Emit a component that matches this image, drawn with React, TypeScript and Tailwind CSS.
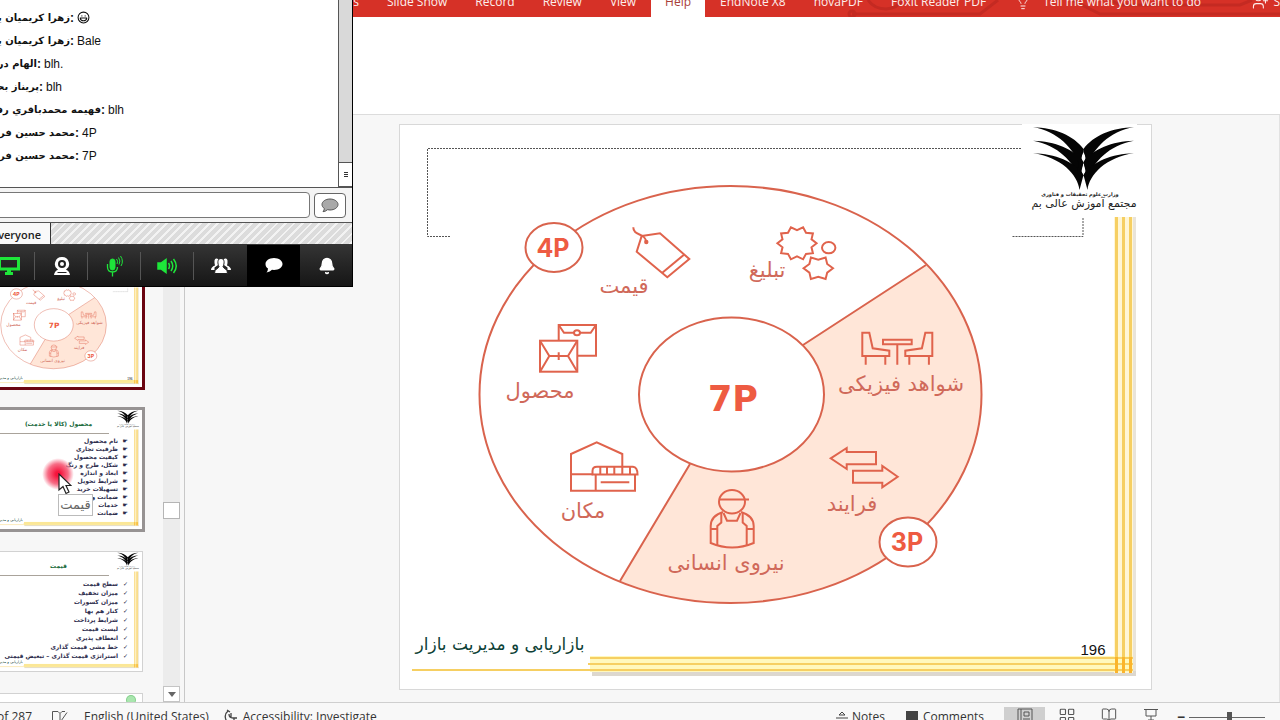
import type { ReactNode } from "react";
import { Bell, BookOpen, Laugh, LayoutGrid, Lightbulb, UserPlus } from "lucide-react";

type Message = {
  id: number;
  name: string;
  // visible width of the sender column
  width: number;
  text: ReactNode;
};

const messages: Message[] = [
  { id: 1, name: "زهرا کریمیان ینگجه", width: 70, text: <Laugh size={13} strokeWidth={2} /> },
  { id: 2, name: "زهرا کریمیان ینگجه", width: 70, text: "Bale" },
  { id: 3, name: "الهام دریایی", width: 37, text: "blh." },
  { id: 4, name: "پریناز بحرینی", width: 39, text: "blh" },
  { id: 5, name: "فهیمه محمدباقري رفسنجانی", width: 101, text: "blh" },
  { id: 6, name: "محمد حسین فروزانفر", width: 75, text: "4P" },
  { id: 7, name: "محمد حسین فروزانفر", width: 75, text: "7P" },
];

const productItems = [
  "نام محصول",
  "ظرفیت تجاری",
  "کیفیت محصول",
  "شکل، طرح و رنگ",
  "ابعاد و اندازه",
  "شرایط تحویل",
  "تسهیلات خرید",
  "ضمانت و",
  "خدمات",
  "ضمانت",
];

const priceItems = [
  "سطح قیمت",
  "میزان تخفیف",
  "میزان کسورات",
  "کنار هم بها",
  "شرایط پرداخت",
  "لیست قیمت",
  "انعطاف پذیری",
  "خط مشی قیمت گذاری",
  "استراتژی قیمت گذاری – تبعیض قیمتی",
];

const starPoints = (cx: number, cy: number, rx: number, ry: number, count: number, inner: number) =>
  Array.from({ length: count * 2 }, (_, i) => {
    const angle = (Math.PI * i) / count;
    const r = i % 2 ? inner : 1;
    return `${(cx + rx * r * Math.cos(angle)).toFixed(1)},${(cy + ry * r * Math.sin(angle)).toFixed(1)}`;
  }).join(" ");

const Wing = () => (
  <>
    <path d="M1134 127.300C1112 127.500 1093 136 1083.500 149L1085.500 158L1088.500 163C1093 150 1109 131 1134 127.300Z" />
    <path d="M1134 140.800C1112 141 1093 149.500 1083.500 162L1085.500 171L1088.500 177C1093 163 1109 145 1134 140.800Z" />
    <path d="M1134 153.300C1112 153.500 1092 162 1083.500 175L1087.500 190C1089 175 1106 157 1134 153.300Z" />
    <path d="M1083.500 149L1090 147V160L1088 163L1090 172L1087 177L1083.500 176L1086 170L1083.500 163L1086 157L1083.500 152Z" />
  </>
);

// Background shared by every slide: logo and golden frame
const SlideFrame = () => (
  <g>
    <rect x="1022" y="124" width="115" height="93" fill="#fff" />
    <g fill="#050505">
      <Wing />
      <g transform="translate(2167 0) scale(-1 1)">
        <Wing />
      </g>
    </g>
    <g fontFamily="'DejaVu Sans', sans-serif" textAnchor="middle" fill="#222">
      <text x="1080" y="196" fontSize="5" fontWeight="700">
        وزارت علوم تحقیقات و فناوری
      </text>
      <text x="1084" y="207" fontSize="11">
        مجتمع آموزش عالی بم
      </text>
    </g>
    <rect x="1132" y="217" width="4" height="459" fill="#e9e4da" />
    <rect x="592" y="671" width="544" height="5" fill="#ddd8cf" />
    <rect x="1114" y="217" width="19" height="456" fill="#fff6d6" />
    <rect x="590" y="656" width="543" height="16" fill="#fff8bd" />
    <g fill="#f6cf62">
      <rect x="1115" y="217" width="3" height="456" />
      <rect x="1122" y="217" width="3" height="456" />
      <rect x="1129" y="217" width="3" height="456" />
      <rect x="590" y="657" width="543" height="2" />
      <rect x="588" y="663" width="545" height="2" />
      <rect x="412" y="669" width="721" height="2" />
    </g>
    <g fill="#fbb42c">
      <rect x="1115" y="657" width="3" height="16" />
      <rect x="1122" y="657" width="3" height="16" />
      <rect x="1129" y="657" width="3" height="16" />
    </g>
    <text
      x="500"
      y="650"
      fontFamily="'DejaVu Sans', sans-serif"
      fontSize="17"
      textAnchor="middle"
      fill="#0d3f36"
    >
      بازاریابی و مدیریت بازار
    </text>
  </g>
);

const PriceTagIcon = () => (
  <g>
    <path d="M633.300 227.300C633 236 646 233 646 242" />
    <circle cx="646.300" cy="242" r="1.200" fill="#e0634c" />
    <path d="M641.700 236L660 233.300L689.300 259L667.300 277.300L636.700 251.700Z" />
    <path d="M684 254.700L662 273" />
  </g>
);

const PackageIcon = () => (
  <g>
    <path d="M558.700 340.700V325H596V355.700H577.300" />
    <path d="M558.700 325L564 332.700H574M580 332.700H590.700L596 325" />
    <ellipse cx="577" cy="332.700" rx="3" ry="2.500" />
    <rect x="540" y="340.700" width="37.300" height="31" />
    <path d="M540 340.700L549.300 356L540 371.700M577.300 340.700L568 356L577.300 371.700M549.300 356H568M558.700 352.300V360" />
  </g>
);

const GearsIcon = () => (
  <g>
    <polygon points={starPoints(797, 243.3, 19.6, 16.8, 10, 0.78)} />
    <polygon points={starPoints(818.3, 268.3, 14.7, 12.3, 6, 0.7)} />
    <ellipse cx="828.700" cy="247.700" rx="6.700" ry="5.600" />
  </g>
);

const Chair = () => (
  <path d="M862.300 332.700H869.300L872.700 348.300L889.300 350.700V356H862.300ZM865.700 356V364.700M885.300 356V364.700" />
);

const TableIcon = () => (
  <g>
    <Chair />
    <g transform="translate(1794.600 0) scale(-1 1)">
      <Chair />
    </g>
    <path d="M883 339.700H911.700V344.300H883ZM897.300 344.300V364.700" />
  </g>
);

const StoreIcon = () => (
  <g>
    <path d="M622.300 466.700V454L596.700 442.300L571 454V490.700H635V474.500M571 474.300H593M595.700 474.500V490.700" />
    <path d="M592.500 474.500V471Q592.500 466.700 597 466.700H633Q637.500 467 637.500 474.500Z" />
    <path d="M600.300 467V474M607 467V474M614.300 467V474M622.300 467V474M630 467V474M600.700 482.300H629.300" />
  </g>
);

const ArrowsIcon = () => (
  <g>
    <path d="M830.700 458.300L846.700 448V452H876V464.300H846.700V469Z" />
    <path d="M897.700 476.700L882.300 466V470.700H853V482.700H882.300V487.300Z" />
  </g>
);

const WorkerIcon = () => (
  <g>
    <ellipse cx="732" cy="501.700" rx="13" ry="11.700" />
    <path d="M719.500 499.500H749" />
    <path d="M723 512Q710.700 516 710.700 526V543Q732 552 753.700 543V526Q753.700 516 741 512" />
    <path d="M710.700 529H717.300M753.700 529H746.700" />
    <path d="M721.300 513V522.500L717.300 526V545M742.700 513V522.500L746.700 526V545" />
    <path d="M723.500 513L727 520.700H737L740.500 513" />
  </g>
);

const labels = [
  { x: 624, y: 293, text: "قیمت" },
  { x: 767, y: 277, text: "تبلیغ" },
  { x: 901, y: 391, text: "شواهد فیزیکی" },
  { x: 852, y: 511, text: "فرایند" },
  { x: 726, y: 570, text: "نیروی انسانی" },
  { x: 583, y: 518, text: "مکان" },
  { x: 540, y: 398, text: "محصول" },
];

const MarketingSlide = () => (
  <svg viewBox="400 125 751 564" className="block h-full w-full overflow-visible" role="img" aria-label="7P">
    <path
      d="M450 236.500H427.500V148.500H1022M1083 218V236.500H1012"
      fill="none"
      stroke="#555"
      strokeWidth="1"
      strokeDasharray="2 1"
    />
    <SlideFrame />
    <g fill="none" stroke="#d9634d" strokeWidth="2">
      <path
        d="M926 265A251 208.500 0 0 1 981.500 394.500A251 208.500 0 0 1 730.500 603A251 208.500 0 0 1 620 581L690 464L731 394L803 345Z"
        fill="#ffe6d8"
        stroke="none"
      />
      <ellipse cx="730.500" cy="394.500" rx="251" ry="208.500" />
      <ellipse cx="731.500" cy="394.500" rx="92.500" ry="77" fill="#fff" />
      <path d="M803 345L926 265M690 464L620 581" />
      <ellipse cx="554" cy="247.500" rx="28.500" ry="24.500" fill="#fff" />
      <ellipse cx="908" cy="542" rx="28.500" ry="24.500" fill="#fff" />
    </g>
    <g fill="none" stroke="#e0634c" strokeWidth="2">
      <PriceTagIcon />
      <PackageIcon />
      <GearsIcon />
      <TableIcon />
      <StoreIcon />
      <ArrowsIcon />
      <WorkerIcon />
    </g>
    <g fill="#d0695a" fontFamily="'DejaVu Sans', sans-serif" fontSize="21" textAnchor="middle">
      {labels.map((label) => (
        <text key={label.text} x={label.x} y={label.y}>
          {label.text}
        </text>
      ))}
    </g>
    <g fill="#ee5b42" fontWeight="700" textAnchor="middle">
      <text x="553" y="257" fontSize="25" fontFamily="Inter, sans-serif">
        4P
      </text>
      <text x="907" y="551" fontSize="25" fontFamily="Inter, sans-serif">
        3P
      </text>
      <text x="733" y="411" fontSize="35" fontFamily="'DejaVu Sans', sans-serif">
        7P
      </text>
    </g>
    <text x="1093" y="655" fontSize="15" fontFamily="'Liberation Sans', sans-serif" textAnchor="middle" fill="#111">
      196
    </text>
  </svg>
);

type ThumbnailProps = {
  frame: string;
  children: ReactNode;
};

const Thumbnail = ({ frame, children }: ThumbnailProps) => (
  <div className={`relative h-[119px] w-[158px] shrink-0 bg-white ${frame}`}>{children}</div>
);

type ListSlideProps = {
  title: string;
  items: string[];
  bullet: string;
  list: string;
};

const ListSlide = ({ title, items, bullet, list }: ListSlideProps) => (
  <>
    <svg viewBox="400 125 751 564" className="absolute inset-0 h-full w-full" aria-hidden="true">
      <SlideFrame />
    </svg>
    <div className="relative font-['DejaVu_Sans',sans-serif]">
      <h2 className="h-6 w-[125px] border-b border-[#a9a39b] pt-2 pl-6 text-center text-[6px] leading-3 font-bold text-[#17693a]">
        {title}
      </h2>
      <ul dir="rtl" className={`mr-[14px] text-[6px] font-bold text-[#2c2c4c] ${list}`}>
        {items.map((item) => (
          <li key={item} className="flex gap-1 whitespace-nowrap">
            <span className="w-[6px]">{bullet}</span>
            {item}
          </li>
        ))}
      </ul>
    </div>
  </>
);

const Pointer = () => (
  <div className="absolute top-[48px] left-[58px] size-[32px] rounded-full bg-[radial-gradient(circle,#f5133c_10%,#f76d86_45%,transparent_70%)]">
    <svg viewBox="0 0 14 22" className="absolute top-[15px] left-[16px] h-[22px] w-[14px]" aria-hidden="true">
      <path d="M1 1V17L5 13.500L8 20.500L11 19L8 12.500H13Z" fill="#fff" stroke="#222" strokeWidth="1.200" />
    </svg>
    <span className="absolute top-[36px] left-[16px] h-[22px] w-[35px] border border-[#bbb] bg-white text-center font-['DejaVu_Sans',sans-serif] text-[13px] leading-5 text-[#666]">
      قیمت
    </span>
  </div>
);

const SlidePane = () => (
  <aside className="flex w-[185px] shrink-0 overflow-hidden border-r border-[#c8c8c8]">
    <div className="flex w-[163px] shrink-0 flex-col items-end gap-[23px] overflow-hidden pt-[153px] pr-[21px]">
      <Thumbnail frame="ring-3 ring-[#6b0511]">
        <MarketingSlide />
      </Thumbnail>
      <Thumbnail frame="ring-3 ring-[#979393]">
        <ListSlide title="محصول (کالا یا خدمت)" items={productItems} bullet="☛" list="pt-[3px] leading-[8px]" />
        <Pointer />
      </Thumbnail>
      <Thumbnail frame="ring-1 ring-[#d2d2d2]">
        <ListSlide title="قیمت" items={priceItems} bullet="✓" list="pt-[3px] leading-[9px]" />
      </Thumbnail>
      <Thumbnail frame="ring-1 ring-[#d2d2d2]">
        <div className="mt-[2px] mr-[7px] ml-auto size-2 rounded-full bg-[#a9e6ae] ring-1 ring-[#84cf8c]" />
      </Thumbnail>
    </div>
    <div className="flex w-[17px] flex-col bg-[#ececec]">
      <div className="mt-[387px] h-[17px] border border-[#b5b5b5] bg-white" />
      <button
        aria-label="Scroll down"
        className="mt-auto flex h-4 items-center justify-center border border-[#c4c4c4] bg-white text-[#666]"
      >
        <svg viewBox="0 0 8 5" className="w-2" aria-hidden="true">
          <path d="M0 0H8L4 5Z" fill="currentColor" />
        </svg>
      </button>
    </div>
  </aside>
);

const tabs = ["Slide Show", "Record", "Review", "View", "Help", "EndNote X8", "novaPDF", "Foxit Reader PDF"];

const Ribbon = () => (
  <header className="shrink-0">
    <div className="relative h-[17px] overflow-hidden bg-[#d63127] font-['Open_Sans',sans-serif] text-xs text-[#fdeeec]">
      <svg className="absolute top-0 right-0 h-[17px] w-[440px]" viewBox="0 0 440 17" aria-hidden="true">
        <g fill="none" stroke="#c42a22" strokeWidth="3">
          <path d="M28 0Q34 9 46 9Q58 8 62 0M12 14H140L158 0M232 0L260 14H440M270 0L280 5H400L412 0" />
          <circle cx="12" cy="14" r="3" />
        </g>
      </svg>
      <nav className="relative flex h-full items-end">
        <div className="flex w-[373px] justify-end">
          <button className="px-[14px] pb-[7px]">Animations</button>
        </div>
        {tabs.map((tab) => (
          <button
            key={tab}
            className={
              tab === "Help"
                ? "mx-px bg-white px-[14px] pb-[7px] whitespace-nowrap text-[#a8403a]"
                : "px-[14px] pb-[7px] whitespace-nowrap"
            }
          >
            {tab}
          </button>
        ))}
        <button className="ml-px flex items-end gap-3 px-[14px] pb-[7px] whitespace-nowrap">
          <Lightbulb size={16} strokeWidth={1.5} />
          Tell me what you want to do
        </button>
        <button className="ml-auto flex items-end gap-1 pb-[7px] whitespace-nowrap">
          <UserPlus size={17} strokeWidth={1.5} />
          S
        </button>
      </nav>
    </div>
    <div className="h-[98px] border-b border-[#dcdcdc] bg-white" />
  </header>
);

const statusButton = "flex h-5 items-center gap-1 whitespace-nowrap";

const StatusBar = () => (
  <footer className="flex h-[18px] shrink-0 items-start overflow-hidden border-t border-[#cfcfcf] bg-[#f8f8f8] pt-[4px] font-['Open_Sans',sans-serif] text-xs text-[#333]">
    <div className="flex w-[32px] justify-end leading-5 whitespace-nowrap">Slide 196 of 287</div>
    <button className="ml-5 h-5" aria-label="Spelling">
      <svg viewBox="0 0 16 16" className="size-4" fill="none" stroke="#555" aria-hidden="true">
        <path d="M8 14L6 12H0.500V2.500H6L8 4.500V14ZM8 4.500L10 2.500H13M9 12L15 3.500M10 12H14" />
      </svg>
    </button>
    <button className={`${statusButton} ml-4`}>English (United States)</button>
    <button className={`${statusButton} ml-[14px]`}>
      <svg viewBox="0 0 16 16" className="size-4" fill="none" stroke="#444" strokeWidth="1.300" aria-hidden="true">
        <path d="M5 2Q0 6 4 13M4 1L7 3M6 5Q6 9 10 9H14M8 4V9M8 12H14M11 9V14" />
      </svg>
      Accessibility: Investigate
    </button>
    <button className={`${statusButton} mr-5 ml-auto`}>
      <svg viewBox="0 0 12 12" className="size-3" fill="none" stroke="#444" aria-hidden="true">
        <path d="M3 4L6 1L9 4ZM0 7H12M0 10H12" />
      </svg>
      Notes
    </button>
    <button className={`${statusButton} mr-5`}>
      <svg viewBox="0 0 14 14" className="size-[14px]" fill="#444" aria-hidden="true">
        <path d="M1 1H13V11H6L3 14V11H1Z" />
      </svg>
      Comments
    </button>
    <button aria-label="Normal" className="flex h-5 w-[41px] justify-center bg-[#cfcfcf] pt-px">
      <svg viewBox="0 0 16 14" className="h-[14px] w-4" fill="none" stroke="#555" aria-hidden="true">
        <path d="M1 1H15V13H1ZM4 1V13M7 4H12V8H7ZM6 11H13" />
      </svg>
    </button>
    <button aria-label="Slide Sorter" className="flex h-5 w-[44px] justify-center">
      <LayoutGrid size={18} strokeWidth={1.5} color="#555" />
    </button>
    <button aria-label="Reading View" className="flex h-5 w-[40px] justify-center">
      <BookOpen size={16} strokeWidth={1.5} color="#555" />
    </button>
    <button aria-label="Presentation" className="flex h-5 w-[44px] justify-center pt-px">
      <svg viewBox="0 0 14 14" className="size-[14px]" fill="none" stroke="#555" aria-hidden="true">
        <path d="M0 1.500H14M2 2V8H12V2M7 8V12M4 12H10" />
      </svg>
    </button>
    <button aria-label="Zoom out" className="flex h-5 w-4 items-center justify-center text-sm font-bold">
      −
    </button>
    <input
      type="range"
      aria-label="Zoom"
      defaultValue={54}
      className="mt-[10px] mr-[15px] h-px w-[76px] appearance-none bg-[#666] [&::-webkit-slider-thumb]:h-[12px] [&::-webkit-slider-thumb]:w-[5px] [&::-webkit-slider-thumb]:appearance-none [&::-webkit-slider-thumb]:bg-[#555]"
    />
  </footer>
);

const toolbarCell = "flex h-full w-[53px] shrink-0 items-center justify-center relative";
const divider = <span className="absolute right-0 h-7 w-px bg-[#555]" />;

const ChatWindow = () => (
  <section className="absolute top-0 -left-[18px] flex h-[287px] w-[371px] flex-col border-r border-b border-black bg-white">
    <div className="flex h-[188px] shrink-0 overflow-hidden border-b border-[#555]">
      <ul className="flex-1 pt-[6px] pl-[18px]">
        {messages.map((message) => (
          <li key={message.id} className="flex h-[23px] items-center font-['Liberation_Sans',sans-serif] text-xs text-[#111]">
            <span
              dir="rtl"
              className="block overflow-hidden font-['DejaVu_Sans',sans-serif] text-[10px] font-bold whitespace-nowrap"
              style={{ width: message.width }}
            >
              {message.name}
            </span>
            <b className="mr-[3px]">:</b>
            {message.text}
          </li>
        ))}
      </ul>
      <div className="flex w-[14px] flex-col border-l border-[#555] bg-[#d9d9d9]">
        <div className="mt-auto flex h-[25px] flex-col items-center justify-center gap-px border-y border-[#555] bg-white">
          <span className="h-px w-1 bg-[#333]" />
          <span className="h-px w-1 bg-[#333]" />
          <span className="h-px w-1 bg-[#333]" />
        </div>
      </div>
    </div>
    <div className="flex h-[34px] shrink-0 items-center gap-1 bg-[#f4f4f4] pr-[6px]">
      <input
        type="text"
        aria-label="Message"
        className="h-[26px] min-w-0 flex-1 rounded-[4px] border border-[#777] bg-white px-2 text-xs outline-none"
      />
      <button aria-label="Send" className="flex h-[25px] w-8 items-center justify-center rounded-[4px] border border-[#666] bg-white">
        <svg viewBox="0 0 18 15" className="h-[15px] w-[18px]" aria-hidden="true">
          <path
            d="M9 1C13.500 1 17 3.500 17 6.500S13.500 12 9 12L6.500 11.700Q4.500 13.500 2 13.700Q3.500 12 3.300 10.400C1.800 9.400 1 8 1 6.500C1 3.500 4.500 1 9 1Z"
            fill="#a9a9a9"
            stroke="#555"
          />
        </svg>
      </button>
    </div>
    <div className="flex h-[22px] shrink-0 border-t border-[#555] bg-[repeating-linear-gradient(135deg,#dcdcdc_0_4px,#f3f3f3_4px_6px)]">
      <button className="w-[69px] border-r border-[#333] bg-[#f9f9f9] pt-[3px] pl-[10px] text-left font-['Open_Sans',sans-serif] text-[11px] font-semibold text-[#222]">
        Everyone
      </button>
    </div>
    <div className="flex flex-1 bg-linear-to-b from-[#353535] to-[#161616] pt-px text-white">
      <button aria-label="Screen share" className={toolbarCell}>
        <svg viewBox="0 0 22 18" className="h-[18px] w-[22px]" aria-hidden="true">
          <path d="M1.500 1.500H20.500V12H1.500Z" fill="none" stroke="#1ee63a" strokeWidth="3" />
          <path d="M9 13H13V15H15V18H7V15H9Z" fill="#1ee63a" />
        </svg>
        {divider}
      </button>
      <button aria-label="Webcam" className={toolbarCell}>
        <svg viewBox="0 0 16 18" className="h-[18px] w-4" fill="currentColor" aria-hidden="true">
          <path d="M8 0A7 7 0 0 1 12 12.800Q15.500 14 16 18H0Q0.500 14 4 12.800A7 7 0 0 1 8 0Z" />
          <circle cx="8" cy="7" r="4" fill="#222" />
          <circle cx="8" cy="7" r="2" />
          <path d="M3.500 15.500H12.500" stroke="#222" />
        </svg>
        {divider}
      </button>
      <button aria-label="Microphone" className={toolbarCell}>
        <svg viewBox="0 0 18 22" className="h-[22px] w-[18px]" fill="none" stroke="#1ee63a" aria-hidden="true">
          <rect x="4" y="4" width="5" height="11" rx="2.500" fill="#1ee63a" />
          <path d="M1.500 9V12Q1.500 17 6.500 17T11.500 12M6.500 17V21.500" strokeWidth="1.300" />
          <path d="M10.500 4Q12.500 6 11 9M12.500 2.500Q15 6 13 9.500M14.500 1Q18 6 15 11" />
        </svg>
        {divider}
      </button>
      <button aria-label="Speaker" className={toolbarCell}>
        <svg viewBox="0 0 21 16" className="h-4 w-[21px]" fill="none" stroke="#1ee63a" strokeWidth="1.500" aria-hidden="true">
          <path d="M1 5H4L9 1.500V14.500L4 11H1Z" fill="#1ee63a" />
          <path d="M11.500 5Q13.500 8 11.500 11M14 3Q17.500 8 14 13M16.500 1Q22 8 16.500 15" />
        </svg>
        {divider}
      </button>
      <button aria-label="Participants" className={toolbarCell}>
        <svg viewBox="0 0 20 17" className="h-[17px] w-5" fill="currentColor" aria-hidden="true">
          <path d="M5 1.500C8 1 8.500 5 7 8L3.500 10.500V13H0Q0 10 4 8.500Q2.500 2 5 1.500ZM15 1.500C12 1 11.500 5 13 8L16.500 10.500V13H20Q20 10 16 8.500Q17.500 2 15 1.500Z" />
          <path d="M10 1.500C14 1.500 13.500 7 12 9.500Q12.500 11 14.500 12Q16.500 13 16.500 16.500H3.500Q3.500 13 5.500 12Q7.500 11 8 9.500C6.500 7 6 1.500 10 1.500Z" stroke="#222" />
        </svg>
      </button>
      <button aria-label="Chat" className={`${toolbarCell} bg-black`}>
        <svg viewBox="0 0 18 15" className="h-[15px] w-[18px]" fill="currentColor" aria-hidden="true">
          <path d="M9 0C14 0 17.500 2.800 17.500 6S14 12 9 12L7 11.800Q5 14 1.500 14.500Q3 12.500 3 10.500C1.500 9.500 0.500 8 0.500 6C0.500 2.800 4 0 9 0Z" />
        </svg>
      </button>
      <button aria-label="Notifications" className={toolbarCell}>
        <Bell size={18} fill="currentColor" />
      </button>
    </div>
  </section>
);

export default function App() {
  return (
    <div className="relative flex h-screen flex-col overflow-hidden bg-[#f7f7f7]">
      <Ribbon />
      <main className="flex min-h-0 flex-1">
        <SlidePane />
        <div className="flex-1 overflow-hidden border-r border-[#e2e2e2] pt-[10px] pr-[128px] pl-[215px]">
          <div className="aspect-[751/564] w-full bg-white ring-1 ring-[#d8d8d8]">
            <MarketingSlide />
          </div>
        </div>
      </main>
      <StatusBar />
      <ChatWindow />
    </div>
  );
}
